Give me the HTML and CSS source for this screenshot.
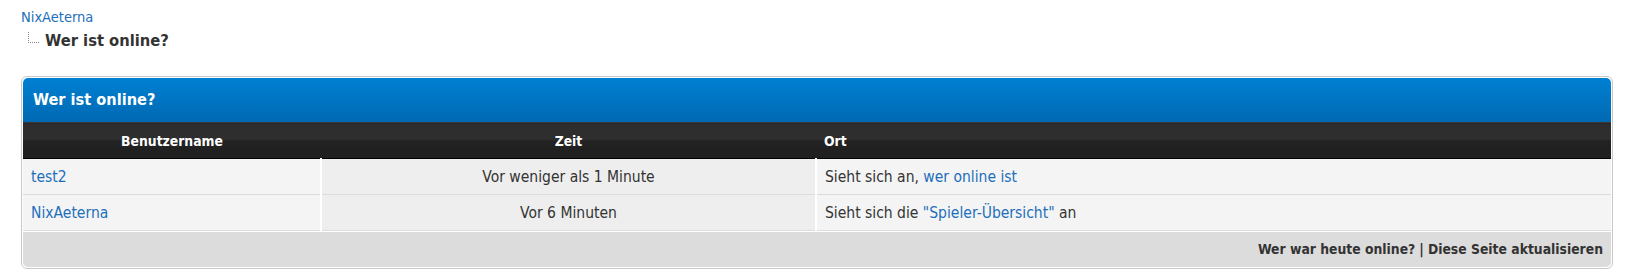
FILE: index.html
```html
<!DOCTYPE html>
<html lang="de">
<head>
    <meta charset="UTF-8">
    <title>Wer ist online?</title>
    <link rel="stylesheet" href="styles.css">
</head>
<body>
    <div class="breadcrumb">
        <a href="#" class="crumb-root">NixAeterna</a>
        <div class="crumb-current">
            <span class="tree-line"></span>
            <span class="crumb-title">Wer ist online?</span>
        </div>
    </div>

    <div class="block">
        <div class="block-head">Wer ist online?</div>
        <table class="online-table">
            <thead>
                <tr>
                    <th class="col-user">Benutzername</th>
                    <th class="col-time">Zeit</th>
                    <th class="col-place">Ort</th>
                </tr>
            </thead>
            <tbody>
                <tr>
                    <td class="col-user"><a href="#">test2</a></td>
                    <td class="col-time">Vor weniger als 1 Minute</td>
                    <td class="col-place">Sieht sich an, <a href="#">wer online ist</a></td>
                </tr>
                <tr>
                    <td class="col-user"><a href="#">NixAeterna</a></td>
                    <td class="col-time">Vor 6 Minuten</td>
                    <td class="col-place">Sieht sich die <a href="#">"Spieler-Übersicht"</a> an</td>
                </tr>
            </tbody>
        </table>
        <div class="block-foot">
            <a href="#">Wer war heute online?</a><span class="sep">|</span><a href="#">Diese Seite aktualisieren</a>
        </div>
    </div>
</body>
</html>
```

FILE: styles.css
```css
body {
    margin: 0;
    padding: 0 14px 0 21px;
    font-family: "DejaVu Sans Condensed", "DejaVu Sans", sans-serif;
    font-size: 15.5px;
    color: #333;
    background: #fff;
}
a {
    color: #1c6fbb;
    text-decoration: none;
}
.breadcrumb {
    padding-top: 8px;
    height: 76px;
    box-sizing: border-box;
}
.crumb-root {
    display: block;
    font-size: 14.5px;
    line-height: 18px;
}
.crumb-current {
    display: flex;
    align-items: flex-end;
    margin-left: 7px;
    margin-top: 3px;
}
.tree-line {
    width: 10px;
    height: 10px;
    margin-bottom: 10px;
    margin-right: 6px;
    border-left: 1px dotted #888;
    border-bottom: 1px dotted #888;
}
.crumb-title {
    font-size: 16.4px;
    font-weight: bold;
    color: #333;
    line-height: 24px;
}
.block {
    border: 1px solid #c8c8c8;
    border-radius: 6px;
    padding: 1px;
    background: #fff;
}
.block-head {
    height: 44px;
    line-height: 44px;
    padding-left: 10px;
    border-radius: 5px 5px 0 0;
    background: linear-gradient(#0080d2, #0069b3);
    color: #fff;
    font-size: 16.2px;
    font-weight: bold;
}
.online-table {
    width: 100%;
    border-collapse: collapse;
}
.online-table th {
    height: 35px;
    padding: 0 8px;
    color: #fff;
    font-size: 13.8px;
    font-weight: bold;
    background: linear-gradient(#2e2e2e 0%, #2e2e2e 45%, #222 50%, #1f1f1f 100%);
    border-top: 1px solid #3a3a3a;
    border-bottom: 1px solid #000;
}
.online-table td {
    height: 35px;
    padding: 0 8px;
    border-bottom: 1px solid #dcdcdc;
    border-right: 2px solid #fff;
    background: #f4f4f4;
}
.online-table td.col-time {
    background: #eee;
}
.online-table td.col-place {
    border-right: none;
}
.col-user {
    width: 281px;
}
.online-table th.col-user,
.online-table th.col-time {
    text-align: center;
}
.online-table th.col-place {
    text-align: left;
}
.online-table td.col-time {
    width: 477px;
    text-align: center;
}
.block-foot {
    height: 35px;
    line-height: 35px;
    padding-right: 8px;
    text-align: right;
    background: #dcdcdc;
    border-top: 1px solid #fff;
    border-radius: 0 0 5px 5px;
    font-size: 13.8px;
    font-weight: bold;
}
.block-foot a {
    color: #333;
}
.block-foot .sep {
    margin: 0 4px;
}
```
